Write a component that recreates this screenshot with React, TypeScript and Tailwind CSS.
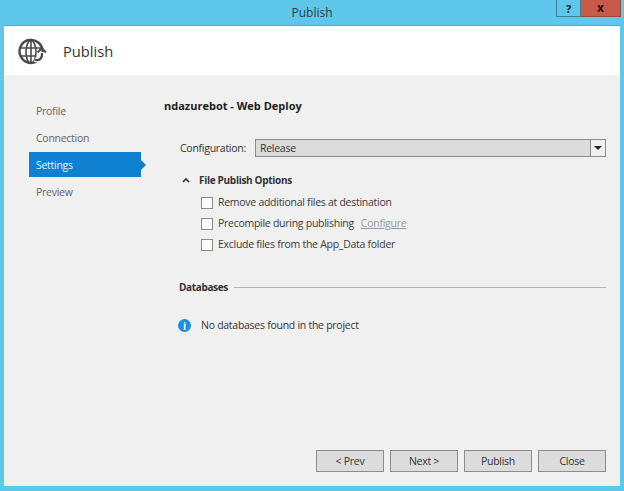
import React from "react";

function Check({ label, extra }: { label: string; extra?: string }) {
  return (
    <div className="flex h-[21px] items-center">
      <span className="h-[12px] w-[12px] border border-[#8a8a8a] bg-[#fbfbfb]" />
      <span className="ml-[5px] text-[#3a3a3a]">{label}</span>
      {extra && <span className="ml-[7px] text-[#8f9aa5] underline">{extra}</span>}
    </div>
  );
}

function Btn({ label }: { label: string }) {
  return (
    <div className="flex h-[22px] w-[68px] items-center justify-center border border-[#8c8c8c] bg-[#dcdcdc] text-[#333]">
      {label}
    </div>
  );
}

function NavItem({ label, active }: { label: string; active?: boolean }) {
  if (active) {
    return (
      <div className="relative flex h-[25px] w-[112px] items-center bg-[#0f7fd0] pl-[7px] pt-px text-[#e8f4fc]">
        {label}
        <span className="absolute right-[-5px] top-[8px] h-0 w-0 border-y-[5px] border-l-[5px] border-y-transparent border-l-[#0f7fd0]" />
      </div>
    );
  }
  return <div className="flex h-[25px] w-[112px] items-center pl-[7px] pt-px text-[#666]">{label}</div>;
}

export default function App() {
  return (
    <div className="flex h-[491px] w-[624px] flex-col overflow-hidden bg-[#5fc8ea] font-['Open_Sans','Noto_Sans',sans-serif] text-[10.5px] leading-none tracking-[-0.27px]">
      <div className="relative flex h-[25px] shrink-0 items-center justify-center text-[12px] tracking-normal text-[#2c3a44]">
        <span>Publish</span>
        <div className="absolute right-[3px] top-0 flex h-[17px]">
          <div className="flex w-[25px] items-center justify-center border-x border-b border-[#3a7f9c] text-[11px] font-bold text-[#10202c]">?</div>
          <div className="flex w-[40px] items-center justify-center border-b border-r border-[#9a4a3c] bg-[#c75a48] text-[12px] font-bold text-[#2a0a08]">x</div>
        </div>
      </div>
      <div className="mx-[4px] mb-[5px] flex grow flex-col border-t border-[#58a9c8] bg-[#f0f0f0]">
        <div className="flex h-[49px] shrink-0 items-center bg-white pl-[13px] pt-[2px]">
          <svg width="30" height="28" viewBox="0 0 30 28" fill="none" stroke="#4a4a4a" strokeWidth="2">
            <path d="M21 22.5A11.5 11.5 0 1 1 25.5 14" strokeWidth="2.4" />
            <ellipse cx="14" cy="14" rx="5" ry="11.5" strokeWidth="1.6" />
            <path d="M3 10h22M3 18h15M14 2.5v23" strokeWidth="1.6" />
            <path d="M17.5 21.5c4.5 2 8-1 7.5-6.5" stroke="#ffffff" strokeWidth="4.5" />
            <path d="M17.5 21.5c4.5 2 8-1 7.5-6.5" stroke="#4a4a4a" strokeWidth="2.2" />
            <path d="M20.5 14.5l4.3-4.3 4.2 4.3" strokeWidth="2" />
          </svg>
          <span className="ml-[16px] text-[14.7px] tracking-normal text-[#333]">Publish</span>
        </div>
        <div className="flex grow">
          <div className="flex w-[160px] shrink-0 flex-col gap-[2px] pl-[25px] pt-[23px]">
            <NavItem label="Profile" />
            <NavItem label="Connection" />
            <NavItem label="Settings" active />
            <NavItem label="Preview" />
          </div>
          <div className="flex grow flex-col pr-[14px]">
            <div className="mt-[25px] text-[11px] font-bold tracking-normal text-[#222]">ndazurebot - Web Deploy</div>
            <div className="ml-[16px] mt-[28px] flex h-[18px] items-center">
              <span className="w-[75px] text-[#333]">Configuration:</span>
              <div className="flex h-[18px] grow items-center justify-between border border-[#8a8a8a] bg-[#dcdcdc] pl-[4px] text-[#333]">
                <span>Release</span>
                <span className="flex h-full w-[15px] items-center justify-center border-l border-[#8a8a8a] bg-[#f0f0f0]">
                  <span className="h-0 w-0 border-x-[4px] border-t-[4px] border-x-transparent border-t-[#222]" />
                </span>
              </div>
            </div>
            <div className="ml-[18px] mt-[18px] flex items-center">
              <svg width="8" height="6" viewBox="0 0 8 6" fill="none" stroke="#333" strokeWidth="1.7">
                <path d="M1 5l3-3 3 3" />
              </svg>
              <span className="ml-[9px] text-[10px] font-bold tracking-[-0.3px] text-[#333]">File Publish Options</span>
            </div>
            <div className="ml-[37px] mt-[7px] flex flex-col">
              <Check label="Remove additional files at destination" />
              <Check label="Precompile during publishing" extra="Configure" />
              <Check label="Exclude files from the App_Data folder" />
            </div>
            <div className="ml-[15px] mt-[27px] flex items-center">
              <span className="text-[10px] font-bold tracking-[-0.35px] text-[#333]">Databases</span>
              <span className="ml-[6px] h-px grow bg-[#b4b4b4]" />
            </div>
            <div className="ml-[14px] mt-[27px] flex items-center">
              <span className="flex h-[13px] w-[13px] items-center justify-center rounded-full bg-[#1c8fdc] text-[10px] font-bold text-white">i</span>
              <span className="ml-[10px] text-[#333]">No databases found in the project</span>
            </div>
            <div className="mb-[14px] mt-auto flex justify-end gap-[6px]">
              <Btn label="< Prev" />
              <Btn label="Next >" />
              <Btn label="Publish" />
              <Btn label="Close" />
            </div>
          </div>
        </div>
      </div>
    </div>
  );
}
